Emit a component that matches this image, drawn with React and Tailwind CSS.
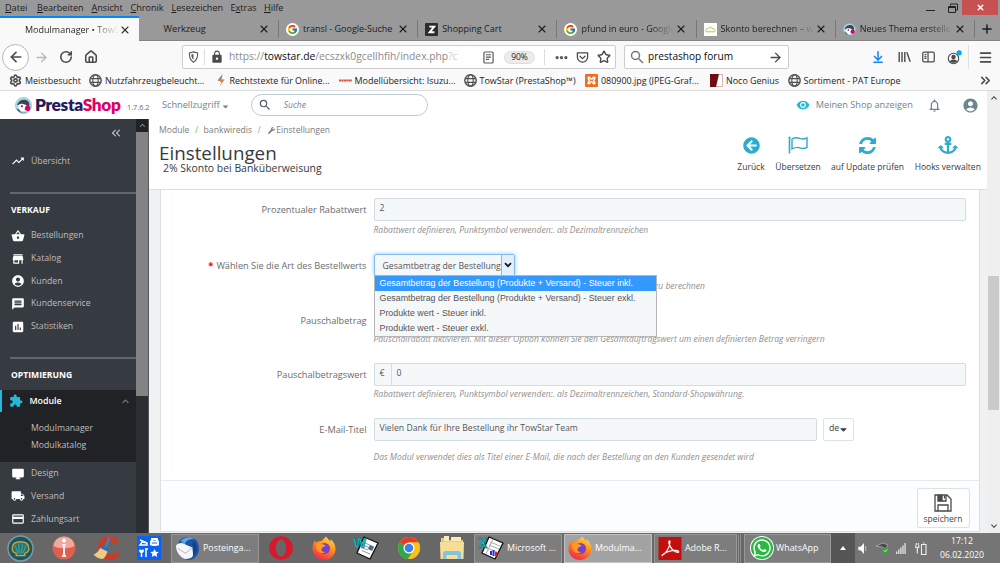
import React from 'react';
import clsx from 'clsx';
import {
  MdTrendingUp, MdShoppingBasket, MdStore, MdAccountCircle, MdMessage, MdAssessment,
  MdExtension, MdDesktopMac, MdLocalShipping, MdCreditCard, MdExpandLess, MdExpandMore,
  MdVisibility, MdNotificationsNone, MdSearch, MdLock,
} from 'react-icons/md';
import { FaAnchor, FaArrowCircleLeft, FaWrench, FaWhatsapp, FaCaretDown } from 'react-icons/fa';
import { FcGoogle } from 'react-icons/fc';
import {
  ArrowLeft, ArrowRight, ArrowDownToLine, ChevronsLeft, ChevronsRight, Ellipsis,
  House, Menu, Plus, RotateCw, Settings, Star, X,
} from 'lucide-react';

const MENU = [
  ['D', 'atei', 'w-[32px]'],
  ['B', 'earbeiten', 'w-[54.5px]'],
  ['A', 'nsicht', 'w-[39px]'],
  ['C', 'hronik', 'w-[41px]'],
  ['L', 'esezeichen', 'w-[59px]'],
];

function PuffinIcon({ className }) {
  return (
    <svg viewBox="0 0 32 32" className={className}>
      <circle cx="16" cy="16" r="15" fill="#a9dcec" stroke="#86bccd" strokeWidth="1.500" />
      <path d="M4 15C6 8 11 5 17 5c7 0 11 5 10 11l-3 2-14-2z" fill="#3f4450" />
      <path d="M6 17c1-4 5-5 9-4s9 2 9 6-4 8-9 8-8-3-9-10z" fill="#fff" />
      <path d="M3 22c4 0 6 2 8 6 3 2 8 2 11 0-5 4-15 3-19-6z" fill="#5b6570" />
      <circle cx="13" cy="17.500" r="2" fill="#333" />
      <path d="M20 17l4-2 5 4-1 6-5 2-5-4z" fill="#df0067" />
    </svg>
  );
}

function PocketIcon() {
  return (
    <svg viewBox="0 0 14 14" className="h-[13px] w-[13px]" fill="none" stroke="#4a4a4f" strokeWidth="1.400" strokeLinecap="round" strokeLinejoin="round">
      <path d="M1.500 2h11v4.500a5.500 5.500 0 0 1-11 0z" />
      <path d="M4.300 5.600L7 8.200l2.700-2.600" />
    </svg>
  );
}

function ShieldIcon() {
  return (
    <svg viewBox="0 0 12 14" className="h-3 w-[11px]">
      <path d="M6 1l4.800 1.300c.2 5-1 8.700-4.800 10.700C2.200 11 1 7.300 1.200 2.300z" fill="none" stroke="#5a5a5f" strokeWidth="1.300" />
      <path d="M6 3.500v7C4.200 9 3.400 7 3.400 4.200z" fill="#5a5a5f" />
    </svg>
  );
}

function TabIcon({ kind }) {
  if (kind === 'google') {
    return (
      <span className="flex h-[13px] w-[13px] shrink-0 items-center justify-center rounded-full bg-white">
        <FcGoogle className="h-[11px] w-[11px]" />
      </span>
    );
  }
  if (kind === 'zen') {
    return (
      <svg viewBox="0 0 13 13" className="h-[13px] w-[13px] shrink-0">
        <rect width="13" height="13" rx="1" fill="#2c2c2c" />
        <path d="M4.300 3.600h4.900L4.600 9.300h4.800" fill="none" stroke="#fff" strokeWidth="1.900" />
      </svg>
    );
  }
  if (kind === 'cloud') {
    return (
      <svg viewBox="0 0 13 13" className="h-[13px] w-[13px] shrink-0">
        <rect width="13" height="13" fill="#fff" />
        <path d="M2.200 8.800C.8 7 2.300 5.600 4 6c.5-2.200 3.600-2.300 4.200-.4C10.800 5.300 12 7.500 10.500 8.800z" fill="none" stroke="#a5cd39" strokeWidth="1" />
      </svg>
    );
  }
  return <PuffinIcon className="h-[13px] w-[13px] shrink-0" />;
}

const TABS = [
  { title: 'transl - Google-Suche', kind: 'google' },
  { title: 'Shopping Cart', kind: 'zen' },
  { title: 'pfund in euro - Google', kind: 'google', fade: true },
  { title: 'Skonto berechnen – wi', kind: 'cloud', fade: true },
  { title: 'Neues Thema erstellen', kind: 'puffin', fade: true },
];

function WindowTop() {
  return (
    <header className="bg-[#999999] text-[#1c1c1c]">
      <div className="flex h-4 items-start pl-[5px] text-[9.100px] leading-[15px]">
        {MENU.map(([key, rest, width]) => (
          <span key={rest} className={clsx('shrink-0', width)}>
            <u>{key}</u>{rest}
          </span>
        ))}
        <span className="w-[33.500px]">E<u>x</u>tras</span>
        <span><u>H</u>ilfe</span>
        <div className="ml-auto flex h-[15px] items-center">
          <span className="mr-[13px] mt-1.5 h-[1.500px] w-[9px] bg-[#222]" />
          <svg viewBox="0 0 10 10" className="mr-[4px] h-[10px] w-[10px]" fill="none" stroke="#222">
            <path d="M2.500 2.500V1h7v6H8" />
            <path d="M.5 3.500h7v6h-7zM.5 4.500h7" />
          </svg>
          <span className="mr-[2px] flex h-[15px] w-9 items-center justify-center bg-[#c75050]">
            <X className="h-[9px] w-[9px] text-white" strokeWidth={4} />
          </span>
        </div>
      </div>
      <div className="flex h-[25px] items-stretch text-[9px]">
        <div className="flex w-[139px] items-center border-t-2 border-[#0a84ff] bg-[#f9f9fa] pl-[25px]">
          <span className="w-[94px] overflow-hidden whitespace-nowrap bg-linear-to-r from-[#222] from-70% to-transparent bg-clip-text text-transparent">Modulmanager • TowS</span>
          <X className="h-3 w-3 text-[#333]" strokeWidth={2.200} />
        </div>
        <div className="flex w-[139px] items-center border-b border-[#858585] pl-[24.500px] pt-[2px]">
          <span className="w-[94.500px] text-[9.200px]">Werkzeug</span>
          <X className="h-3 w-3" strokeWidth={2.200} />
        </div>
        {TABS.map((tab) => (
          <div key={tab.title} className="flex w-[139.200px] shrink-0 items-center border-b border-[#858585] pt-[2px]">
            <span className="mr-[7px] h-[18px] w-px bg-[#777]" />
            <TabIcon kind={tab.kind} />
            <span
              className={clsx(
                'ml-[4px] mr-[1px] w-[93px] overflow-hidden whitespace-nowrap',
                tab.fade && 'bg-linear-to-r from-[#1c1c1c] from-75% to-transparent bg-clip-text text-transparent'
              )}
            >
              {tab.title}
            </span>
            <X className="h-3 w-3 shrink-0" strokeWidth={2.200} />
          </div>
        ))}
        <div className="flex flex-1 items-center border-b border-[#858585] pt-[2px]">
          <span className="mr-[5px] h-[18px] w-px bg-[#777]" />
          <Plus className="h-[14px] w-[14px] shrink-0" strokeWidth={2.500} />
        </div>
      </div>
    </header>
  );
}

function NavBar() {
  return (
    <div className="flex h-[30px] items-center bg-[#f9f9fa] pl-[2px] pt-[2px] text-[#4a4a4f]">
      <span className="flex h-[27px] w-[27px] shrink-0 items-center justify-center rounded-full border border-[#b5b5b5] bg-white">
        <ArrowLeft className="h-4 w-4" strokeWidth={2.500} />
      </span>
      <ArrowRight className="ml-[5px] h-[15px] w-[15px] text-[#b8b8ba]" strokeWidth={2.200} />
      <RotateCw className="ml-[10px] h-[14px] w-[14px]" strokeWidth={2.700} />
      <House className="ml-[11px] h-[14px] w-[14px]" strokeWidth={2.700} />
      <div className="ml-[84px] flex h-6 w-[434px] shrink-0 items-center rounded-[2px] border border-[#ccc] bg-white pl-[5px]">
        <ShieldIcon />
        <span className="mx-[5px] h-4 w-px bg-[#ddd]" />
        <MdLock className="h-[14px] w-[14px]" />
        <span className="ml-[5px] w-[231px] whitespace-nowrap text-[10.300px] text-[#8a8a8d]">
          https://<span className="text-[#0c0c0d]">towstar.de</span>/ecszxk0gcellhfih/index.php<span className="text-[#ccc]">?c</span>
        </span>
        <svg viewBox="0 0 12 14" className="ml-[23px] h-[13px] w-[11px]" fill="none" stroke="#5a5a5f" strokeWidth="1.300">
          <rect x="1" y="1" width="10" height="12" rx="1" />
          <path d="M3.200 4h5.600M3.200 6.500h5.600M3.200 9h3.400" />
        </svg>
        <span className="ml-[10px] flex h-[13px] w-[31px] items-center justify-center rounded-full border border-[#ddd] bg-[#ececee] text-[8.500px] text-[#222]">90%</span>
        <span className="ml-[9px] h-4 w-px bg-[#ddd]" />
        <Ellipsis className="ml-[9px] h-[15px] w-[15px]" strokeWidth={3.200} />
        <span className="ml-[7px]"><PocketIcon /></span>
        <Star className="ml-[8px] h-[14px] w-[14px]" strokeWidth={2.400} />
      </div>
      <div className="ml-2 flex h-6 w-[165px] shrink-0 items-center rounded-[2px] border border-[#ccc] bg-white pl-[5px]">
        <svg viewBox="0 0 14 14" className="h-[14px] w-[14px]" fill="none" stroke="#77777a" strokeWidth="1.500">
          <circle cx="5.500" cy="5.500" r="4" />
          <path d="M8.500 8.500l4.500 4.500" />
        </svg>
        <span className="ml-[4px] w-[120px] text-[10.100px] text-[#0c0c0d]">prestashop forum</span>
        <ArrowRight className="h-[15px] w-[15px]" strokeWidth={2.200} />
      </div>
      <ArrowDownToLine className="ml-[82px] h-[14px] w-[14px] text-[#0a84ff]" strokeWidth={2.600} />
      <svg viewBox="0 0 13 12" className="ml-[13px] h-3 w-[13px]" fill="none" stroke="#4a4a4f" strokeWidth="1.400">
        <path d="M1.200 1v10M4 1v10M6.800 1v10M8.800 1.200l3.400 9.600" />
      </svg>
      <svg viewBox="0 0 14 12" className="ml-[11px] h-3 w-[13px]" fill="none" stroke="#4a4a4f" strokeWidth="1.300">
        <rect x=".8" y=".8" width="12.400" height="10.400" rx="1.500" />
        <path d="M6.500 1v10M2.700 3.500h2M2.700 5.500h2M2.700 7.500h2" />
      </svg>
      <svg viewBox="0 0 15 15" className="ml-[12px] h-[15px] w-[15px]">
        <circle cx="6.500" cy="8.500" r="5.200" fill="none" stroke="#4a4a4f" strokeWidth="1.100" />
        <circle cx="6.500" cy="7" r="2.200" fill="#4a4a4f" />
        <path d="M2.800 11.200c1.500-2.200 6-2.200 7.400 0-1.500 2.200-5.800 2.200-7.400 0z" fill="#4a4a4f" />
        <circle cx="12.200" cy="2.800" r="2.600" fill="#00a8f0" />
      </svg>
      <span className="ml-[6px] h-6 w-px bg-[#e0e0e0]" />
      <Menu className="ml-[9px] h-[15px] w-[15px]" strokeWidth={2.500} />
    </div>
  );
}

function GlobeIcon() {
  return (
    <svg viewBox="0 0 13 13" className="h-[13px] w-[13px] shrink-0" fill="none" stroke="#4f4f52" strokeWidth="1.100">
      <circle cx="6.500" cy="6.500" r="5.700" strokeWidth="1.400" />
      <ellipse cx="6.500" cy="6.500" rx="2.700" ry="5.700" />
      <path d="M1.300 4.600h10.400M1.300 8.400h10.400" />
    </svg>
  );
}

const BOOKMARKS = [
  { label: 'Meistbesucht', width: 'w-[80px]', icon: <Settings className="h-[13px] w-[13px] shrink-0 text-[#4a4a4f]" strokeWidth={3} /> },
  { label: 'Nutzfahrzeugbeleucht...', width: 'w-[124.500px]', icon: <GlobeIcon /> },
  {
    label: 'Rechtstexte für Online...',
    width: 'w-[125px]',
    icon: (
      <svg viewBox="0 0 13 13" className="h-[13px] w-[13px] shrink-0">
        <path d="M8.500 0L3.500 6.500l3 .8L8 3.500z" fill="#8a8a8a" />
        <path d="M5.500 12.500l5-7-3.500-.3-1 2.500 1.500.6z" fill="#f37021" />
      </svg>
    ),
  },
  {
    label: 'Modellübersicht: Isuzu...',
    width: 'w-[125px]',
    icon: (
      <svg viewBox="0 0 13 13" className="h-[13px] w-[13px] shrink-0">
        <path d="M0 6.500h13" stroke="#ee4b43" strokeWidth="1.800" strokeDasharray="2.200 .3" />
      </svg>
    ),
  },
  { label: 'TowStar (PrestaShop™)', width: 'w-[121.500px]', icon: <GlobeIcon /> },
  {
    label: '080900.jpg (JPEG-Graf...',
    width: 'w-[125px]',
    icon: (
      <svg viewBox="0 0 13 13" className="h-[13px] w-[13px] shrink-0">
        <rect width="13" height="13" rx="1" fill="#ea7020" />
        <path d="M3.500 3c2 0 1.500 2 3 2s1-2 3-2M3.500 10c2 0 1.500-2.500 3-2.500s1 2.500 3 2.500M3.300 3c-.8 2 1 2.500 1 3.500s-1.800 1.500-1 3.500M9.700 3c.8 2-1 2.500-1 3.500s1.800 1.500 1 3.500" fill="none" stroke="#fff" strokeWidth="1.500" />
      </svg>
    ),
  },
  {
    label: 'Noco Genius',
    width: 'w-[77.500px]',
    icon: (
      <svg viewBox="0 0 13 13" className="h-[13px] w-[13px] shrink-0">
        <rect x=".5" y=".5" width="12" height="12" fill="#fff" stroke="#d8b8b8" />
        <path d="M0 0h9L6 13H0z" fill="#6e0d14" />
      </svg>
    ),
  },
  { label: 'Sortiment - PAT Europe', width: 'w-[190px]', icon: <GlobeIcon /> },
];

function Bookmarks() {
  return (
    <div className="flex h-5 items-center border-b border-[#dcdcdc] bg-[#f9f9fa] pl-[9px] text-[8.950px] text-[#1c1c1c]">
      {BOOKMARKS.map(({ label, width, icon }) => (
        <div key={label} className={clsx('flex shrink-0 items-center gap-[3px] whitespace-nowrap', width)}>
          {icon}
          <span>{label}</span>
        </div>
      ))}
      <ChevronsRight className="h-[15px] w-[15px] shrink-0 text-[#4a4a4f]" strokeWidth={2.500} />
    </div>
  );
}

function ShopHeader() {
  return (
    <div className="flex h-7 items-center bg-white pl-[15px] text-[#6c868e]">
      <PuffinIcon className="h-[17px] w-[17px]" />
      <span className="ml-[3px] w-[86px] font-['Lato'] text-[17.300px] font-extrabold leading-none tracking-[-0.350px] text-[#251b5b]">
        Presta<span className="text-[#df0067]">Shop</span>
      </span>
      <span className="ml-[6px] mt-1 w-[35px] text-[7.300px] text-[#6b6b6b]">1.7.6.2</span>
      <span className="text-[9.200px]">Schnellzugriff</span>
      <FaCaretDown className="ml-[2px] mt-[2px] h-[9px] w-[7px]" />
      <div className="ml-[22px] flex h-[22px] w-[177px] items-center rounded-full border border-[#bbcdd2] pl-[6px]">
        <MdSearch className="h-[14px] w-[14px] text-[#4f5f65]" />
        <span className="ml-[12px] text-[8.500px] italic">Suche</span>
      </div>
      <MdVisibility className="ml-[368px] h-[14px] w-[14px] text-[#25b9d7]" />
      <span className="ml-[6px] w-[111px] text-[9.200px]">Meinen Shop anzeigen</span>
      <MdNotificationsNone className="h-[15px] w-[15px]" />
      <MdAccountCircle className="ml-[20px] h-[17px] w-[17px]" />
    </div>
  );
}

function SideLink({ icon: Icon, label }) {
  return (
    <div className="flex h-[22.700px] items-center pl-[10.500px] text-[8.700px] text-[#bebebe]">
      <Icon className="mr-[6.500px] h-[14px] w-[14px] text-white" />
      {label}
    </div>
  );
}

function Sidebar() {
  return (
    <nav className="flex w-[149px] shrink-0 bg-[#363a41]">
      <div className="w-[136px]">
        <div className="flex h-[31px] justify-end pr-[13px] pt-[7px] text-[#bebebe]">
          <ChevronsLeft className="h-[14px] w-[14px]" strokeWidth={2} />
        </div>
        <SideLink icon={MdTrendingUp} label="Übersicht" />
        <div className="ml-[10px] mt-[19.300px] h-[2px] bg-[#5b6a72]" />
        <div className="mt-[10px] pl-[11px] text-[8.600px] font-bold leading-3 text-white">VERKAUF</div>
        <div className="mt-[8.500px]">
          <SideLink icon={MdShoppingBasket} label="Bestellungen" />
          <SideLink icon={MdStore} label="Katalog" />
          <SideLink icon={MdAccountCircle} label="Kunden" />
          <SideLink icon={MdMessage} label="Kundenservice" />
          <SideLink icon={MdAssessment} label="Statistiken" />
        </div>
        <div className="ml-[10px] mt-[19.500px] h-[2px] bg-[#5b6a72]" />
        <div className="mt-[10px] pl-[11px] text-[8.600px] font-bold leading-3 text-white">OPTIMIERUNG</div>
        <div className="mt-[8.500px] h-[72.500px] bg-[#202226]">
          <div className="flex h-[22.500px] items-center border-l-[2.500px] border-[#25b9d7] pl-[7px] text-[8.800px] font-semibold text-white">
            <MdExtension className="mr-[6.500px] h-[14px] w-[14px] text-[#25b9d7]" />
            Module
            <MdExpandLess className="ml-auto mr-[4px] h-[13px] w-[13px] text-[#6c868e]" />
          </div>
          <div className="mt-[8px] pl-[31px] text-[8.700px] leading-[17px] text-[#bebebe]">
            <div>Modulmanager</div>
            <div>Modulkatalog</div>
          </div>
        </div>
        <SideLink icon={MdDesktopMac} label="Design" />
        <SideLink icon={MdLocalShipping} label="Versand" />
        <SideLink icon={MdCreditCard} label="Zahlungsart" />
      </div>
      <div className="w-[13px] border-r border-[#55585d] bg-[#2b2e33]">
        <div className="flex h-[13px] items-center justify-center bg-[#202226]">
          <MdExpandLess className="h-[11px] w-[11px] shrink-0 text-[#999]" />
        </div>
        <div className="h-[264px] bg-[#838383]" />
      </div>
    </nav>
  );
}

function ToolbarAction({ label, className, children }) {
  return (
    <div className={clsx('flex flex-col items-center text-[8.500px] text-[#363a41]', className)}>
      <span className="flex h-5 items-center text-[#2eacce]">{children}</span>
      <span className="mt-[6px] whitespace-nowrap leading-3">{label}</span>
    </div>
  );
}

function PageHead() {
  return (
    <div className="flex h-[71px] border-b border-[#dcdfe1] bg-white pl-[10px]">
      <div className="w-[571px]">
        <div className="flex h-[22px] items-center text-[8.600px] text-[#7c7c7c]">
          Module <span className="mx-[5.500px] text-[#72c279]">/</span>
          bankwiredis <span className="mx-[5.500px] text-[#72c279]">/</span>
          <FaWrench className="ml-[1.500px] mr-[1.500px] h-[7px] w-[7px]" /> Einstellungen
        </div>
        <h1 className="mt-[1px] text-[18.800px] leading-[22px] text-[#363a41]">Einstellungen</h1>
        <div className="relative -mt-[3px] pl-[4px] text-[10.430px] leading-[14px] text-[#363a41]">2% Skonto bei Banküberweisung</div>
      </div>
      <div className="flex pt-[16px]">
        <ToolbarAction label="Zurück" className="w-[42px]">
          <FaArrowCircleLeft className="h-[17px] w-[17px]" />
        </ToolbarAction>
        <ToolbarAction label="Übersetzen" className="w-[52px]">
          <svg viewBox="0 0 20 18" className="h-[18px] w-5" fill="none" stroke="currentColor" strokeWidth="1.400">
            <path d="M1.500 1v16.500" strokeWidth="1.600" />
            <path d="M4 3c4-2.500 6.500-1 8.500-.3 2.500.8 4.500.2 6.500-.9v9.500c-2.500 1.400-4.500 1.600-7 .6-3-1.200-5-.5-8 1z" />
            <circle cx="1.500" cy="1.600" r="1" fill="currentColor" stroke="none" />
          </svg>
        </ToolbarAction>
        <ToolbarAction label="auf Update prüfen" className="w-[87px]">
          <svg viewBox="0 0 1536 1536" className="h-[17px] w-[17px]" fill="currentColor">
            <path d="M1511 928q0 5-1 7-64 268-268 434.500T764 1536q-146 0-282.500-55T238 1324l-129 129q-19 19-45 19t-45-19-19-45V960q0-26 19-45t45-19h448q26 0 45 19t19 45-19 45l-137 137q71 66 161 102t187 36q134 0 250-65t186-179q11-17 53-117 8-23 30-23h192q13 0 22.500 9.500t9.500 22.500zm25-800v448q0 26-19 45t-45 19h-448q-26 0-45-19t-19-45 19-45l138-138Q969 256 768 256q-134 0-250 65T332 500q-11 17-53 117-8 23-30 23H50q-13 0-22.500-9.500T18 608v-7q65-268 270-434.500T768 0q146 0 284 55.500T1297 212l130-129q19-19 45-19t45 19 19 45z" />
          </svg>
        </ToolbarAction>
        <ToolbarAction label="Hooks verwalten" className="w-[73.500px]">
          <FaAnchor className="h-5 w-5" />
        </ToolbarAction>
      </div>
    </div>
  );
}

function Field({ label, required, help, className, helpClass, children }) {
  return (
    <div className={clsx('flex', className)}>
      <div className="w-[206px] shrink-0 pt-[5.500px] text-right text-[9.200px] leading-[14px] text-[#6b6b6b]">
        {required && <span className="mr-[3px] text-[9.500px] font-bold leading-none text-[#f00]">*</span>}
        {label}
      </div>
      <div className="ml-[7px] w-[592px]">
        {children}
        <div className={clsx('whitespace-nowrap text-[8.500px] italic leading-3 text-[#8f8f8f]', helpClass)}>{help}</div>
      </div>
    </div>
  );
}

const OPTIONS = [
  'Gesamtbetrag der Bestellung (Produkte + Versand) - Steuer inkl.',
  'Gesamtbetrag der Bestellung (Produkte + Versand) - Steuer exkl.',
  'Produkte wert - Steuer inkl.',
  'Produkte wert - Steuer exkl.',
];

function OrderTypeSelect() {
  return (
    <div className="relative w-[141px]">
      <div className="flex h-[22px] items-stretch rounded-[2px] border border-[#7fbcf0] bg-[#f5f8f9] shadow-[0_0_4px_#8cc8f8]">
        <span className="w-[127px] overflow-hidden whitespace-nowrap pl-2 text-[8.700px] leading-[22px] text-[#555]">Gesamtbetrag der Bestellung (</span>
        <span className="flex w-[13px] items-center justify-center border-l border-[#7fbcf0] bg-[#e3f0fb]">
          <svg viewBox="0 0 8 6" className="h-[6px] w-2" fill="none" stroke="#111" strokeWidth="1.700">
            <path d="M1 1.200l3 3 3-3" />
          </svg>
        </span>
      </div>
      <ul className="absolute left-0 top-[21px] z-10 w-[283px] border border-[#b5b5b5] bg-[#f5f8f9] font-['Liberation_Sans'] text-[8.850px] leading-[15px] text-[#555]">
        {OPTIONS.map((option, i) => (
          <li key={option} className={clsx('whitespace-nowrap pl-[5px]', i === 0 && 'bg-[#3399ff] text-white')}>{option}</li>
        ))}
      </ul>
    </div>
  );
}

function SettingsForm() {
  const input = 'flex h-[23px] items-center rounded-[2px] border border-[#d0dde1] bg-[#f5f8f9] text-[8.700px] text-[#555]';
  return (
    <div className="flex-1 overflow-hidden bg-[#eff1f2] pl-[10.500px] pr-[7.500px]">
      <div className="h-[342px] border-x border-b border-[#dbe0e3] bg-white">
        <Field label="Prozentualer Rabattwert" help="Rabattwert definieren, Punktsymbol verwenden:. als Dezimaltrennzeichen" className="h-[56px] pt-[7.500px]" helpClass="mt-[3px]">
          <div className={clsx(input, 'pl-[5px]')}>2</div>
        </Field>
        <Field required label="Wählen Sie die Art des Bestellwerts" help={<span className="ml-[281px]">zu berechnen</span>} className="h-[55px] pt-[7.500px]" helpClass="mt-[4px]">
          <OrderTypeSelect />
        </Field>
        <Field label="Pauschalbetrag" help="Pauschalrabatt aktivieren. Mit dieser Option können Sie den Gesamtauftragswert um einen definierten Betrag verringern" className="h-[54px] pt-[7px]" helpClass="mt-[3px]">
          <div className="h-[22px]" />
        </Field>
        <Field label="Pauschalbetragswert" help="Rabattwert definieren, Punktsymbol verwenden:. als Dezimaltrennzeichen, Standard-Shopwährung." className="h-[55px] pt-[7.500px]" helpClass="mt-[2.500px]">
          <div className={input}>
            <span className="flex h-full w-[17px] items-center border-r border-[#d0dde1] pl-[5px]">€</span>
            <span className="pl-[5px]">0</span>
          </div>
        </Field>
        <Field label="E-Mail-Titel" help="Das Modul verwendet dies als Titel einer E-Mail, die nach der Bestellung an den Kunden gesendet wird" className="h-[70px] pt-[7.500px]" helpClass="mt-[10px]">
          <div className="flex">
            <div className={clsx(input, 'w-[443px] pl-[5px]')}>Vielen Dank für Ihre Bestellung ihr TowStar Team</div>
            <div className="ml-[6px] flex h-[23px] w-[31px] items-center justify-center rounded-[2px] border border-[#dde2e4] text-[8.700px] text-[#363a41]">
              de<FaCaretDown className="ml-[1px] h-[11px] w-[7px]" />
            </div>
          </div>
        </Field>
        <div className="flex h-[51px] justify-end border-t border-[#e6eaec] bg-[#fcfdfe] pr-[9px] pt-[7px]">
          <div className="flex h-10 w-[53px] flex-col items-center rounded-[2px] border border-[#dde2e4] bg-white pt-[5px] text-[8.500px] leading-3 text-[#444]">
            <svg viewBox="0 0 18 18" className="mb-[1px] h-[18px] w-[18px] shrink-0" fill="none" stroke="#4a4a4a" strokeWidth="1.300">
              <path d="M1 1h12l4 4v12H1z" />
              <path d="M4 17v-6h10v6M4 1v6h8V1" />
              <path d="M4.500 1.500H8V6.500H4.500zM10.500 1.500v3" fill="#4a4a4a" />
            </svg>
            speichern
          </div>
        </div>
      </div>
    </div>
  );
}

function TaskButton({ label, active, width, className, children }) {
  return (
    <div
      className={clsx(
        'flex h-[29px] shrink-0 items-center gap-[3px] whitespace-nowrap border pl-[3px] text-[8.900px] text-white',
        active ? 'border-[#c4c4c4] bg-[#a3a3a3]' : 'border-[#989898] bg-[#7d7d7d]',
        width,
        className
      )}
    >
      {children}
      <span>{label}</span>
    </div>
  );
}

function FirefoxIcon() {
  return (
    <svg viewBox="0 0 24 24" className="h-6 w-6 shrink-0">
      <defs>
        <linearGradient id="fox" x1=".8" y1="0" x2=".3" y2="1">
          <stop offset="0" stopColor="#ffe14a" />
          <stop offset=".45" stopColor="#ff8a1c" />
          <stop offset="1" stopColor="#f0264f" />
        </linearGradient>
      </defs>
      <path d="M14 .5c2 2 2.500 3.500 4.500 5 .3-1 .2-1.700 0-2.500 3 2.500 5 6 5 10a11.500 11 0 0 1-23 0C.5 9 1.500 6.500 3 4.500c.2 1 .6 1.700 1 2C6 5 8 5 9.500 5c1.500-2 3-2.500 4.500-4.500z" fill="url(#fox)" />
      <circle cx="12.500" cy="12.500" r="5.500" fill="#7542c9" />
      <path d="M4 8c3-1.500 5-1 7 .5 1.500.2 2.500.5 2.500 1.500-1.500 1-3.500 1-4 3s1.500 3.500 4 3c-3 2.500-8 .5-9-3z" fill="#ff9a1f" />
    </svg>
  );
}

function ShellIcon() {
  return (
    <svg viewBox="0 0 28 28" className="h-[27px] w-[27px]">
      <circle cx="14" cy="14" r="13" fill="#1b5561" stroke="#7d9ba0" strokeWidth="1.500" />
      <path d="M9.500 21.500v-2.500C5 18 5 15 5.500 13 6 9 9 7 14 7s8 2 8.500 6c.5 2 .5 5-4 6v2.500z" fill="#2b756f" stroke="#d0a63c" strokeWidth="1.300" />
      <path d="M11.500 19L8.500 11M13 19l-1-10M15 19l1-10M16.500 19l3-8" stroke="#46a79c" />
    </svg>
  );
}

function InfoIcon() {
  return (
    <svg viewBox="0 0 24 24" className="h-6 w-6">
      <circle cx="12" cy="12" r="11.500" fill="#df5f4e" />
      <path d="M1.500 10a10.500 9.500 0 0 1 21 0c-6 3-15 3-21 0z" fill="#f0a99e" />
      <circle cx="12" cy="4.500" r="2" fill="#fff" />
      <path d="M10 8h4l-1 3v7l1.500 3h-5l1.500-3v-7z" fill="#f7f0ee" />
    </svg>
  );
}

function CleanerIcon() {
  return (
    <svg viewBox="0 0 28 26" className="h-[25px] w-[27px]">
      <path d="M25 7.500C20-1 8 2 8 12.500s12 13 18 5" fill="none" stroke="#cf3a27" strokeWidth="5.500" />
      <path d="M17 1l-4 11" stroke="#3b82c4" strokeWidth="2.500" />
      <path d="M9.500 10l7 3-1.500 3-7.500-3.500z" fill="#2c6fb5" />
      <path d="M7.500 12.500l7.500 3.500c-1 4-3 6.500-5 8-4-.5-7-2-9.500-4.500 3-1.500 5.500-4 7-7z" fill="#f0c987" />
    </svg>
  );
}

function ToolsTile() {
  return (
    <svg viewBox="0 0 24 24" className="h-6 w-6">
      <rect width="24" height="24" fill="#0b62ee" />
      <g fill="none" stroke="#fff" strokeWidth="1.500">
        <path d="M3 4l7 3M3 9h7V7L5 6z" />
        <path d="M15 5V3h5v2M14 5.500h7v3h-7zM15.500 9h4" strokeWidth="1.800" />
        <path d="M4.500 14v7M3 13.500v2l1.500 1 1.500-1v-2M9 13v8M8 13h3" />
      </g>
      <path d="M17.500 13l1.300 2.800 3 .3-2.200 2 .6 3-2.700-1.500-2.700 1.500.6-3-2.200-2 3-.3z" fill="#fff" />
    </svg>
  );
}

function ThunderbirdIcon() {
  return (
    <svg viewBox="0 0 26 26" className="h-[25px] w-[25px] shrink-0">
      <path d="M3 8C5 3 9 1 14 1c7 0 11 5 11 12s-5 12-11 12c-3 0-5-1-6-2l8-9z" fill="#1c56a4" />
      <path d="M6 5c4-4 10-5 14-2-6 0-9 2-10 6z" fill="#58a9e6" />
      <path d="M1 10c3-3 6-3 8-2l9 4 1 9c-4 3-9 4-12 1-4-3-6-7-6-12z" fill="#f6f6f8" />
      <path d="M3 13l8 5 7-6" fill="none" stroke="#a9b6ca" />
      <path d="M19 5c5 4 5 12-1 17 2-5 2-9 0-12z" fill="#143f87" />
    </svg>
  );
}

// Old Office icons share the tilted page and differ in letter and content.
function OfficeIcon({ letter, children }) {
  return (
    <svg viewBox="0 0 26 26" className="h-[26px] w-[26px] shrink-0">
      <path d="M11 2l14 6-8 16L4 18z" fill="#fff" stroke="#111" strokeWidth="1.300" />
      {children}
      <text x="0" y="13" fontFamily="Liberation Sans" fontSize="14" fontWeight="bold" fill="#19c3c9" stroke="#0b5f63" strokeWidth=".5">{letter}</text>
    </svg>
  );
}

function ChromeIcon() {
  return (
    <svg viewBox="0 0 24 24" className="h-6 w-6">
      <circle cx="12" cy="12" r="11" fill="#fbc116" />
      <path d="M12 12L2.500 6.500A11 11 0 0 1 21.500 6.500H12z" fill="#e33b2e" />
      <path d="M12 12L2.500 6.500A11 11 0 0 0 11 23l5.500-8.500z" fill="#2da94f" />
      <path d="M12 6.500h9.500A11 11 0 0 1 11 23l6-9z" fill="#fbc116" />
      <circle cx="12" cy="12" r="5.500" fill="#fff" />
      <circle cx="12" cy="12" r="4.300" fill="#3f80ee" />
    </svg>
  );
}

function ExplorerIcon() {
  return (
    <svg viewBox="0 0 26 26" className="h-[26px] w-[26px]">
      <path d="M2 3h7l1 2h14v19H2z" fill="#e9cb72" />
      <path d="M5 1h5v5H5zM12 2h10v4H12z" fill="#f7ecc0" />
      <path d="M1 7h24l-.5 17h-23z" fill="#f5df96" />
      <path d="M4 24v-5c0-2 1-3 3-3h12c2 0 3 1 3 3v5h-3.500v-4h-11v4z" fill="#7fc4e4" />
    </svg>
  );
}

function Slot({ width, children }) {
  return <span className={clsx('flex shrink-0 items-center justify-center', width)}>{children}</span>;
}

function Taskbar() {
  return (
    <footer className="flex h-[30px] items-center bg-[#676767] text-white">
      <Slot width="w-[41px]"><ShellIcon /></Slot>
      <Slot width="w-[45px]"><InfoIcon /></Slot>
      <Slot width="w-[41px]"><CleanerIcon /></Slot>
      <Slot width="w-[44px]"><ToolsTile /></Slot>
      <TaskButton label="Posteinga..." width="w-[88px]"><ThunderbirdIcon /></TaskButton>
      <Slot width="w-[44px]">
        <svg viewBox="0 0 24 24" className="h-6 w-6">
          <ellipse cx="12" cy="12" rx="11.800" ry="11.800" fill="#d9182d" />
          <ellipse cx="12" cy="12" rx="5.300" ry="8.600" fill="#676767" />
        </svg>
      </Slot>
      <Slot width="w-[42px]"><FirefoxIcon /></Slot>
      <Slot width="w-[42px]">
        <OfficeIcon letter="W">
          <path d="M12 8l9 4M11 10.500l5 2M10 13l5 2M9 15.500l8 3.500" stroke="#999" />
          <path d="M17 10l4 2-2 4-4-2z" fill="#3a6f86" />
        </OfficeIcon>
      </Slot>
      <Slot width="w-[43px]"><ChromeIcon /></Slot>
      <Slot width="w-[43px]"><ExplorerIcon /></Slot>
      <TaskButton label="Microsoft ..." width="w-[88px]" className="ml-[1px]">
        <OfficeIcon letter="X">
          <path d="M12 7l10 4M11 10l10 4M9 13l10 4M15 4l-7 15" stroke="#aaa" />
          <path d="M13 20v-4M15.500 21v-6" stroke="#2b2bd0" strokeWidth="2" />
          <path d="M18 21v-4" stroke="#e02020" strokeWidth="2" />
        </OfficeIcon>
      </TaskButton>
      <TaskButton active label="Modulma..." width="w-[88px]" className="ml-[2px]"><FirefoxIcon /></TaskButton>
      <TaskButton label="Adobe R..." width="w-[83px]" className="ml-[2px]">
        <svg viewBox="0 0 24 24" className="h-[23px] w-6 shrink-0">
          <rect width="24" height="24" fill="#c40d0d" />
          <path d="M4 19c3-1 8-8 8-14 0-2-2-1-1 2 1 4 5 9 9 9 2 0 1-2-2-2-4 0-9 1-13 4-2 1-1 2-1 1z" fill="none" stroke="#fff" strokeWidth="1.300" />
        </svg>
      </TaskButton>
      <span className="ml-[1px] mr-[2px] h-[29px] w-[3px] border-x border-[#8f8f8f]" />
      <TaskButton label="WhatsApp" width="w-[87px]" className="ml-[1px] pl-[6px]">
        <span className="flex h-[22px] w-[22px] items-center justify-center rounded-full bg-[#2cb742] ring-1 ring-white">
          <FaWhatsapp className="h-5 w-5" />
        </span>
      </TaskButton>
      <span className="flex h-full w-6 items-center justify-center bg-[#565656]">
        <svg viewBox="0 0 6 4" className="h-[4px] w-[6px]"><path d="M0 4l3-4 3 4z" fill="#fff" /></svg>
      </span>
      <div className="flex h-full flex-1 items-center bg-[#757575] pl-[3px]">
        <svg viewBox="0 0 10 14" className="h-[13px] w-[10px]">
          <path d="M0 5h2.500l3.500-4v12L2.500 9H0z" fill="#fff" />
          <path d="M8 4.500v5" stroke="#ccc" />
        </svg>
        <svg viewBox="0 0 14 12" className="ml-[8px] h-3 w-[14px]">
          <path d="M0 4l7-3 5 2-2 4-4-2z" fill="#4a4a4a" stroke="#ddd" strokeWidth=".5" />
          <circle cx="9.500" cy="8.500" r="3" fill="#2fae3a" />
          <path d="M8 8.500l1.200 1.200 2-2.200" fill="none" stroke="#fff" strokeWidth=".8" />
        </svg>
        <svg viewBox="0 0 10 11" className="ml-[6px] h-[11px] w-[10px]" fill="#ddd">
          <path d="M0 8.500h1.400V11H0zM2.100 6.500h1.400V11H2.100zM4.200 4.500h1.400V11H4.200zM6.300 2.500h1.400V11H6.300zM8.400 0h1.400v11H8.400z" />
        </svg>
        <svg viewBox="0 0 12 13" className="ml-[9px] h-[13px] w-3" fill="none" stroke="#eee" strokeWidth="1.100">
          <path d="M6.500 2.500h4.500v10H6.500zM8 1h1.500M.8 3v2.500h3V3M2.300 5.500v6M1.300 1v2M3.300 1v2" />
        </svg>
        <div className="ml-[6px] w-[58px] text-center text-[8.600px] leading-[14px]">
          <div>17:12</div>
          <div>06.02.2020</div>
        </div>
      </div>
    </footer>
  );
}

export default function App() {
  return (
    <div className="flex h-[563px] w-[1000px] flex-col overflow-hidden bg-white font-['Open_Sans',sans-serif]">
      <WindowTop />
      <NavBar />
      <Bookmarks />
      <div className="flex h-[442px] shrink-0">
        <div className="flex w-[987px] flex-col">
          <ShopHeader />
          <div className="flex h-[414px]">
            <Sidebar />
            <main className="flex flex-1 flex-col">
              <PageHead />
              <SettingsForm />
            </main>
          </div>
        </div>
        <div className="flex w-[13px] flex-col items-center justify-between bg-[#efefef] py-[1px] text-[#444]">
          <MdExpandLess className="h-3 w-3" />
          <div className="mt-[62px] h-[134px] w-[11px] bg-[#cacaca]" />
          <MdExpandMore className="h-3 w-3" />
        </div>
      </div>
      <Taskbar />
    </div>
  );
}
